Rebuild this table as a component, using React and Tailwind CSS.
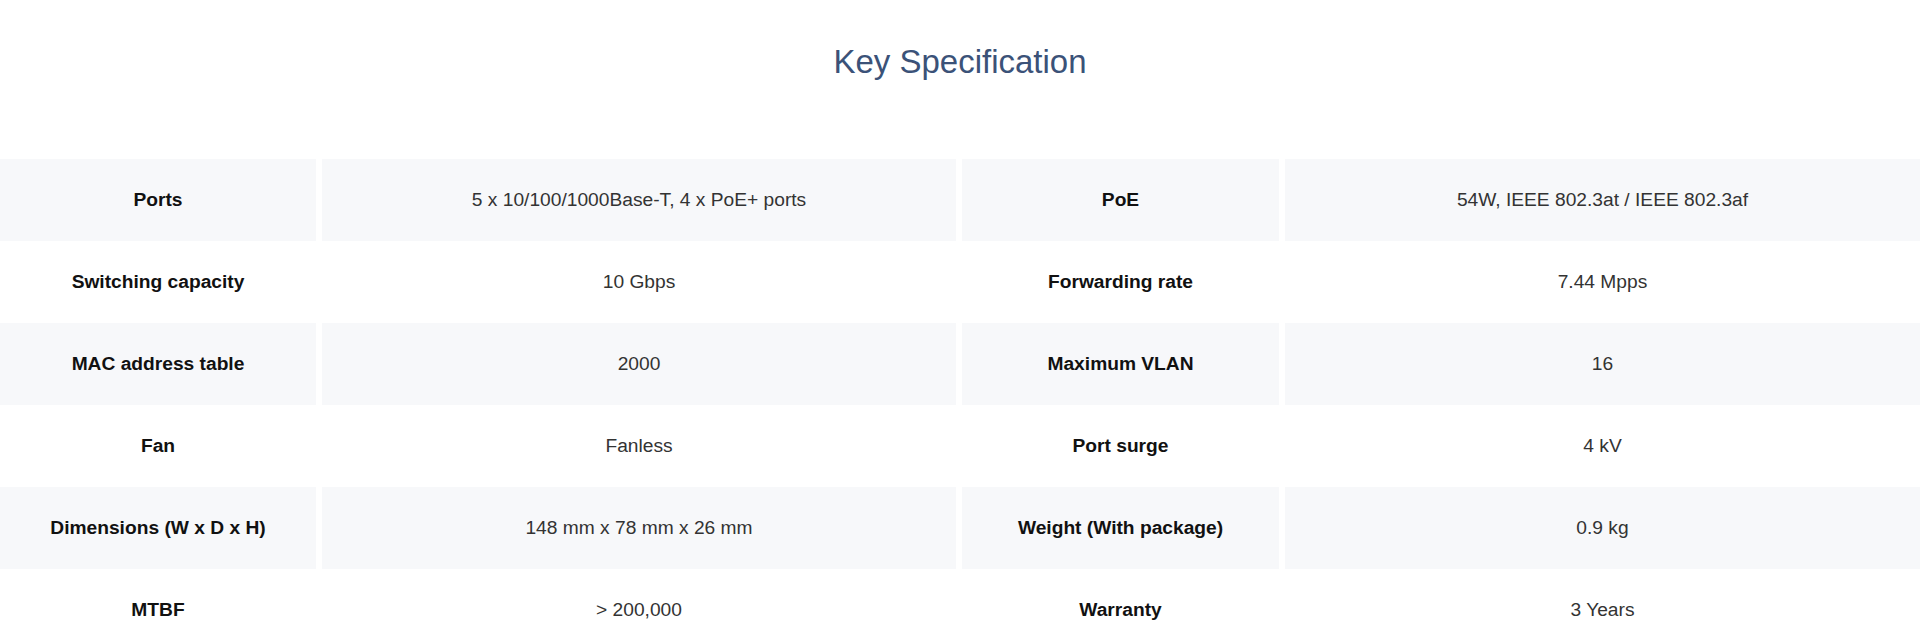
import React from "react";

const specs = [
  ["Ports", "5 x 10/100/1000Base-T, 4 x PoE+ ports", "PoE", "54W, IEEE 802.3at / IEEE 802.3af"],
  ["Switching capacity", "10 Gbps", "Forwarding rate", "7.44 Mpps"],
  ["MAC address table", "2000", "Maximum VLAN", "16"],
  ["Fan", "Fanless", "Port surge", "4 kV"],
  ["Dimensions (W x D x H)", "148 mm x 78 mm x 26 mm", "Weight (With package)", "0.9 kg"],
  ["MTBF", "> 200,000", "Warranty", "3 Years"],
];

const KeySpecification = () => {
  return (
    <div className="min-h-screen bg-white font-['Liberation_Sans',Arial,sans-serif]">
      {/* Heading */}
      <div className="pt-[44px] mb-[79px] text-center">
        <h1 className="text-[33px] leading-[36px] font-normal text-[#3b5278]">Key Specification</h1>
      </div>

      {/* Spec table */}
      <div>
        {specs.map((row, i) => {
          const bg = i % 2 === 0 ? "bg-[#f7f8fa]" : "bg-white";
          return (
            <div key={row[0]} className="grid grid-cols-[316px_634px_317px_1fr] gap-x-[6px]">
              <div className={`h-[82px] flex items-center justify-center font-bold text-[19.2px] text-[#111] ${bg}`}>
                {row[0]}
              </div>
              <div className={`h-[82px] flex items-center justify-center text-[19.2px] text-[#333] ${bg}`}>
                {row[1]}
              </div>
              <div className={`h-[82px] flex items-center justify-center font-bold text-[19.2px] text-[#111] ${bg}`}>
                {row[2]}
              </div>
              <div className={`h-[82px] flex items-center justify-center text-[19.2px] text-[#333] ${bg}`}>
                {row[3]}
              </div>
            </div>
          );
        })}
      </div>
    </div>
  );
};

export default KeySpecification;
